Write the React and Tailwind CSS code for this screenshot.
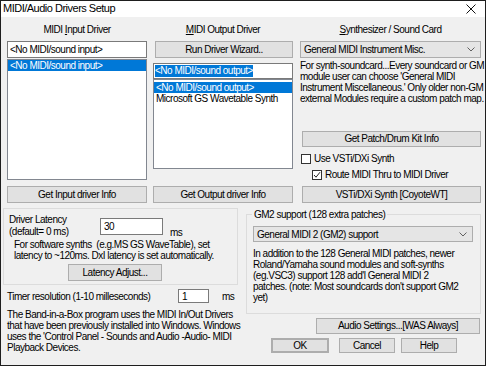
import React from "react";

function Btn({ className = "", children }) {
  return (
    <div
      className={
        "flex items-center justify-center border border-[#adadad] bg-[#e1e1e1] whitespace-nowrap leading-none " +
        className
      }
    >
      {children}
    </div>
  );
}

function Chevron() {
  return (
    <svg width="8" height="5" viewBox="0 0 8 5" className="shrink-0">
      <polyline points="0.5,0.5 4,4 7.5,0.5" fill="none" stroke="#606060" strokeWidth="1" />
    </svg>
  );
}

function Combo({ className = "", children }) {
  return (
    <div
      className={
        "flex items-center justify-between border border-[#adadad] bg-[#e5e5e5] pl-[3px] pr-[5px] whitespace-nowrap " +
        className
      }
    >
      <span>{children}</span>
      <Chevron />
    </div>
  );
}

function Check({ checked, label, className = "" }) {
  return (
    <div className={"flex items-center h-[11px] whitespace-nowrap " + className}>
      <div className="w-[10px] h-[10px] border border-[#333] bg-white flex items-center justify-center">
        {checked && (
          <svg width="8" height="8" viewBox="0 0 8 8">
            <polyline points="1,4 3,6.2 7,1.2" fill="none" stroke="#222" strokeWidth="1" />
          </svg>
        )}
      </div>
      <span className="ml-[3px]">{label}</span>
    </div>
  );
}

function Lines({ lines, className = "" }) {
  return (
    <div className={"leading-[11px] whitespace-pre " + className}>
      {lines.map((l, i) => (
        <div key={i}>{l}</div>
      ))}
    </div>
  );
}

export default function App() {
  return (
    <div className="w-[486px] h-[366px] border border-[#1e1e1e] bg-[#f0f0f0] flex flex-col overflow-hidden text-[10px] tracking-[-0.5px] text-black font-['Liberation_Sans',Arial,sans-serif]">
      {/* title bar */}
      <div className="h-[16px] bg-white flex items-start justify-between pl-[2px] pr-[9px]">
        <span className="text-[11px] leading-[14px]">MIDI/Audio Drivers Setup</span>
        <svg width="10" height="10" viewBox="0 0 10 10" className="mt-[3px]">
          <line x1="0.5" y1="0.5" x2="9.5" y2="9.5" stroke="#111" strokeWidth="1" />
          <line x1="9.5" y1="0.5" x2="0.5" y2="9.5" stroke="#111" strokeWidth="1" />
        </svg>
      </div>

      {/* top: three columns */}
      <div className="flex pl-[6px] pt-[6px] h-[186px]">
        {/* input */}
        <div className="w-[140px] flex flex-col h-[180px]">
          <div className="h-[13px] leading-[13px] text-center whitespace-nowrap">
            MIDI <u>I</u>nput Driver
          </div>
          <div className="mt-[5px] h-[17px] border border-[#7a7a7a] bg-white pl-[2px] flex items-center whitespace-nowrap">
            &lt;No MIDI/sound input&gt;
          </div>
          <div className="mt-[1px] h-[121px] border border-[#828790] bg-white">
            <div className="h-[11px] leading-[11px] bg-[#0078d7] text-white px-[2px] whitespace-nowrap">
              &lt;No MIDI/sound input&gt;
            </div>
          </div>
          <Btn className="mt-auto h-[17px]">Get Input driver Info</Btn>
        </div>

        {/* output */}
        <div className="ml-[6px] w-[140px] flex flex-col h-[180px]">
          <div className="h-[13px] leading-[13px] text-center whitespace-nowrap">
            <u>M</u>IDI Output Driver
          </div>
          <Btn className="mt-[5px] ml-[2px] h-[17px]">Run Driver Wizard..</Btn>
          <div className="mt-[5px] h-[16px] border border-[#7a7a7a] bg-white pl-[1px] flex items-center whitespace-nowrap">
            <span className="bg-[#0078d7] text-white leading-[12px]">&lt;No MIDI/sound output&gt;</span>
          </div>
          <div className="h-[90px] border border-[#828790] bg-white pt-[2px]">
            <div className="h-[11px] leading-[11px] bg-[#0078d7] text-white px-[2px] whitespace-nowrap">
              &lt;No MIDI/sound output&gt;
            </div>
            <div className="h-[11px] leading-[11px] px-[2px] whitespace-nowrap">
              Microsoft GS Wavetable Synth
            </div>
          </div>
          <Btn className="mt-auto h-[17px]">Get Output driver Info</Btn>
        </div>

        {/* synth */}
        <div className="ml-[7px] w-[181px] flex flex-col h-[180px]">
          <div className="h-[13px] leading-[13px] text-center whitespace-nowrap">
            <u>S</u>ynthesizer / Sound Card
          </div>
          <Combo className="mt-[5px] h-[17px]">General MIDI Instrument Misc.</Combo>
          <Lines
            className="mt-[2px]"
            lines={[
              "For synth-soundcard...Every soundcard or GM",
              "module user can choose 'General MIDI",
              "Instrument Miscellaneous.' Only older non-GM",
              "external Modules require a custom patch map.",
            ]}
          />
          <Btn className="mt-[27px] ml-[2px] h-[16px]">Get Patch/Drum Kit Info</Btn>
          <Check className="mt-[6px] ml-[1px]" label="Use VSTi/DXi Synth" />
          <Check className="mt-[5px] ml-[12px]" checked label="Route MIDI Thru to MIDI Driver" />
          <Btn className="mt-auto ml-[2px] h-[17px]">VSTi/DXi Synth [CoyoteWT]</Btn>
        </div>
      </div>

      {/* bottom */}
      <div className="flex pl-[2px]">
        {/* left */}
        <div className="w-[235px] flex flex-col">
          <div className="mt-[5px] h-[77px] border border-[#dcdcdc] pt-[5px]">
            <div className="flex items-start pl-[5px]">
              <div className="w-[91px] leading-[12px] whitespace-nowrap">
                <div>Driver Latency</div>
                <div>(default= 0 ms)</div>
              </div>
              <div className="mt-[4px] w-[63px] h-[17px] border border-[#7a7a7a] bg-white pl-[3px] flex items-center">
                30
              </div>
              <div className="ml-[7px] mt-[13px] leading-[12px]">ms</div>
            </div>
            <Lines
              className="pl-[10px]"
              lines={[
                "For software synths  (e.g.MS GS WaveTable), set",
                "latency to ~120ms. DxI latency is set automatically.",
              ]}
            />
            <Btn className="mt-[3px] ml-[64px] w-[94px] h-[17px]">Latency Adjust...</Btn>
          </div>

          <div className="mt-[4px] h-[14px] flex items-center pl-[4px]">
            <div className="w-[171px] whitespace-nowrap">Timer resolution (1-10 milleseconds)</div>
            <div className="w-[31px] h-[14px] border border-[#7a7a7a] bg-white pl-[3px] flex items-center">1</div>
            <div className="ml-[13px]">ms</div>
          </div>

          <Lines
            className="mt-[6px] pl-[4px]"
            lines={[
              "The Band-in-a-Box program uses the MIDI In/Out Drivers",
              "that have been previously installed into Windows. Windows",
              "uses the 'Control Panel - Sounds and Audio -Audio- MIDI",
              "Playback Devices.",
            ]}
          />
        </div>

        {/* right */}
        <div className="ml-[8px] w-[235px] flex flex-col">
          <fieldset className="mt-[5px] h-[106px] border border-[#dcdcdc]">
            <legend className="ml-[5px] px-[2px] leading-[13px] whitespace-nowrap">
              GM2 support (128 extra patches)
            </legend>
            <Combo className="mt-[5px] ml-[6px] w-[220px] h-[16px]">General MIDI 2 (GM2) support</Combo>
            <Lines
              className="mt-[6px] pl-[6px]"
              lines={[
                "In addition to the 128 General MIDI patches, newer",
                "Roland/Yamaha sound modules and soft-synths",
                "(eg.VSC3) support 128 add'l General MIDI 2",
                "patches. (note: Most soundcards don't support GM2",
                "yet)",
              ]}
            />
          </fieldset>
          <Btn className="mt-[4px] ml-[70px] w-[164px] h-[16px]">Audio Settings...[WAS Always]</Btn>
          <div className="mt-[4px] flex">
            <Btn className="ml-[25px] w-[58px] h-[15px] border-2 border-[#0078d7]">OK</Btn>
            <Btn className="ml-[10px] w-[56px] h-[15px]">Cancel</Btn>
            <Btn className="ml-[6px] w-[56px] h-[15px]">Help</Btn>
          </div>
        </div>
      </div>
    </div>
  );
}
